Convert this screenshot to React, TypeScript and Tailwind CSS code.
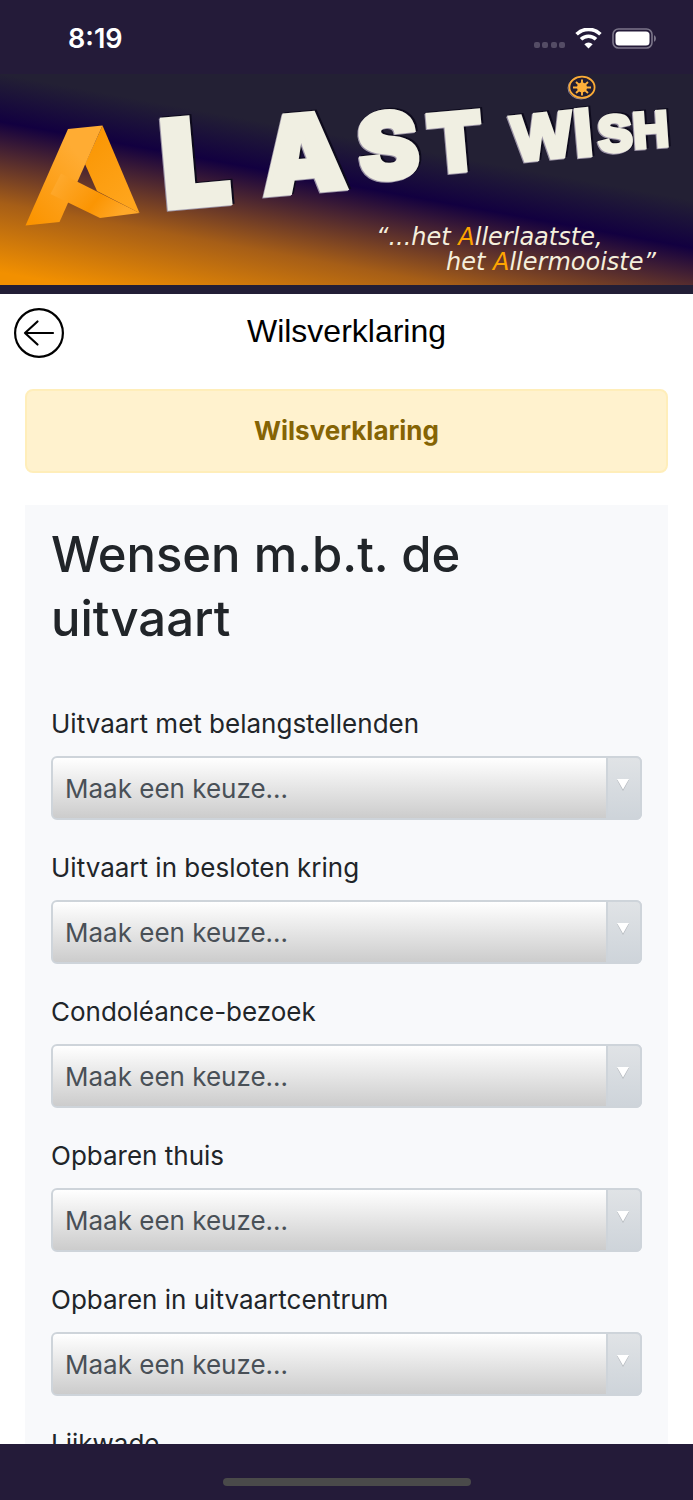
import React, { useState } from 'react';

const WISHES = [
  { id: 'belangstellenden', label: 'Uitvaart met belangstellenden' },
  { id: 'besloten', label: 'Uitvaart in besloten kring' },
  { id: 'condoleance', label: 'Condoléance-bezoek' },
  { id: 'thuis', label: 'Opbaren thuis' },
  { id: 'uitvaartcentrum', label: 'Opbaren in uitvaartcentrum' },
  { id: 'lijkwade', label: 'Lijkwade' },
];

const WIDE = 'Inter, sans-serif';
const NARROW = 'Liberation Sans, Arial, sans-serif';

// wordmark letters, each tilted around its own baseline start
const LETTERS = [
  { char: 'L', x: 165, y: 134, size: 120, angle: -5, font: WIDE, stroke: 6 },
  { char: 'A', x: 264, y: 121, size: 106, angle: -5, font: WIDE, stroke: 5 },
  { char: 'S', x: 361, y: 108, size: 92, angle: -6, font: WIDE, stroke: 4 },
  { char: 'T', x: 430, y: 100, size: 82, angle: -5, font: WIDE, stroke: 3 },
  { char: 'W', x: 515, y: 87, size: 63, angle: -6, font: NARROW, stroke: 5 },
  { char: 'I', x: 576, y: 82, size: 66, angle: -5, font: NARROW, stroke: 5 },
  { char: 'S', x: 600, y: 78, size: 50, angle: -5, font: NARROW, stroke: 5 },
  { char: 'H', x: 634, y: 74, size: 50, angle: -4, font: NARROW, stroke: 4 },
];

const StatusBar: React.FC = () => (
  <div className="flex h-[74px] shrink-0 items-center justify-between bg-[#241b39] pt-1 pr-9 pl-[68px]">
    <span className="text-[27px] leading-8 font-semibold text-white">8:19</span>
    <div className="flex items-center gap-[10px]">
      <svg width="32" height="22" viewBox="0 0 32 22" fill="#544c65">
        <rect x="1" y="14" width="6" height="6" rx="2" />
        <rect x="9" y="14" width="6" height="6" rx="2" />
        <rect x="18" y="14" width="6" height="6" rx="2" />
        <rect x="26" y="14" width="6" height="6" rx="2" />
      </svg>
      <svg width="27" height="22" viewBox="0 0 27 22" fill="none" stroke="#fff" strokeWidth="3.6">
        <path d="M1.6 6.2A17 17 0 0 1 25.4 6.2" />
        <path d="M6 11.3A10.8 10.8 0 0 1 21 11.3" />
        <path d="M13.5 20.5L9.3 16.3A6 6 0 0 1 17.7 16.3Z" fill="#fff" stroke="none" />
      </svg>
      <svg className="mb-[2px]" width="45" height="21" viewBox="0 0 45 21">
        <rect x="1" y="1" width="39" height="19" rx="5.5" fill="none" stroke="#7c768a" strokeWidth="1.6" />
        <rect x="3.5" y="3.5" width="34" height="14" rx="3.5" fill="#fff" />
        <path d="M42 7.2C44.6 8.2 44.6 12.8 42 13.8Z" fill="#7c768a" />
      </svg>
    </div>
  </div>
);

const Banner: React.FC = () => (
  <div className="shrink-0 border-b-[9px] border-[#221e36] bg-[#222034]">
    <svg className="block h-auto w-full" viewBox="0 0 693 211" role="img" aria-label="A Last Wish">
      <defs>
        <linearGradient id="sky" gradientUnits="userSpaceOnUse" x1="0" y1="0" x2="-35" y2="192">
          <stop offset="0" stopColor="#232034" />
          <stop offset="0.24" stopColor="#120040" />
          <stop offset="0.42" stopColor="#522a2f" />
          <stop offset="0.65" stopColor="#a65e17" />
          <stop offset="1" stopColor="#f29000" />
        </linearGradient>
        <linearGradient id="legLeft" x1="0.7" y1="0.3" x2="0.1" y2="1">
          <stop offset="0" stopColor="#ffac33" />
          <stop offset="1" stopColor="#fb9400" />
        </linearGradient>
        <linearGradient id="legRight" x1="0" y1="0" x2="0.6" y2="1">
          <stop offset="0" stopColor="#f99400" />
          <stop offset="1" stopColor="#ffa51c" />
        </linearGradient>
        <linearGradient id="bar" x1="0" y1="0" x2="1" y2="0.4">
          <stop offset="0" stopColor="#ffad35" />
          <stop offset="0.65" stopColor="#fb9503" />
          <stop offset="1" stopColor="#ffa828" />
        </linearGradient>
      </defs>
      <rect width="693" height="211" fill="url(#sky)" />

      {/* folded ribbon A */}
      <path d="M102.5 51.5L139.5 139L97 117L85 90Z" fill="url(#legRight)" />
      <path d="M68 55L102.5 51.5L59.5 148L25.5 151.5Z" fill="url(#legLeft)" />
      <path d="M61 99.5L139.5 139L100 144L50.5 120Z" fill="url(#bar)" />

      {LETTERS.map(({ char, x, y, size, angle, font, stroke }, i) => (
        <g
          key={i}
          transform={`rotate(${angle} ${x} ${y})`}
          fontFamily={font}
          fontSize={size}
          fontWeight={900}
          strokeWidth={stroke}
          strokeLinejoin="miter"
        >
          <text x={x + 2} y={y - 1} fill="#0d0a1c" stroke="#0d0a1c">{char}</text>
          <text x={x - 1} y={y + 1} fill="#9d95a8" stroke="#9d95a8">{char}</text>
          <text x={x} y={y} fill="#f0efe2" stroke="#f0efe2">{char}</text>
        </g>
      ))}

      {/* sun above the I */}
      <ellipse cx="581" cy="14" rx="13" ry="11" fill="none" stroke="#8d8598" strokeWidth="1" />
      <ellipse cx="582" cy="13.3" rx="12.6" ry="10.6" fill="#221e33" stroke="#fbab36" strokeWidth="1.8" />
      <circle cx="582" cy="13.5" r="5" fill="#ffb03a" />
      <path
        d="M582 5.5V21.5M573 13.5H591M576 8L588 19M588 8L576 19"
        stroke="#ffb03a"
        strokeWidth="1.9"
      />

      <g fontFamily="Verdana, DejaVu Sans, sans-serif" fontSize="24" fontStyle="italic" fill="#f5efdc">
        <text x="376" y="171">“...het <tspan fill="#ffa500">A</tspan>llerlaatste,</text>
        <text x="446" y="196">het <tspan fill="#ffa500">A</tspan>llermooiste”</text>
      </g>
    </svg>
  </div>
);

const WishSelect: React.FC<{ id: string; label: string }> = ({ id, label }) => {
  const [value, setValue] = useState('');

  return (
    <div className="flex flex-col gap-3">
      <label htmlFor={id} className="text-[26px] leading-10 text-[#212529]">{label}</label>
      <div className="relative">
        <select
          id={id}
          value={value}
          onChange={(e) => setValue(e.target.value)}
          className="block h-16 w-full appearance-none rounded-md border-2 border-[#ced4da] bg-linear-to-b from-white to-[#cccccc] pr-12 pl-3 text-[26px] text-[#495057]"
        >
          <option value="">Maak een keuze...</option>
          <option value="ja">Ja</option>
          <option value="nee">Nee</option>
        </select>
        <span className="pointer-events-none absolute inset-y-0 right-0 flex w-9 justify-center rounded-r-md border-2 border-[#ced4da] bg-linear-to-b from-[#e0e3e6] to-[#ced4da] pt-5 pr-[2px]">
          <svg width="14" height="14" viewBox="0 0 14 14">
            <path d="M1 2H13L7 13Z" fill="#b3b8bd" />
            <path d="M1 1H13L7 11.5Z" fill="#fff" />
          </svg>
        </span>
      </div>
    </div>
  );
};

export default function App() {
  return (
    <div className="flex h-screen flex-col bg-white font-['Inter','Liberation_Sans',sans-serif]">
      <StatusBar />
      <Banner />

      {/* Title bar */}
      <header className="grid shrink-0 grid-cols-[52px_1fr_52px] items-start px-[13px] pt-[13px] pb-[30px]">
        <button type="button" aria-label="Terug" className="p-px">
          <svg className="block" width="50" height="50" viewBox="0 0 50 50" fill="none" stroke="#000" strokeWidth="2.2">
            <circle cx="25" cy="25" r="23.9" />
            <path d="M39 25H11M23.5 13.5L11 25L23.5 36.5" strokeLinecap="round" strokeLinejoin="round" />
          </svg>
        </button>
        <h1 className="text-center font-['Liberation_Sans',Arial,sans-serif] text-[32px] leading-12 text-black">
          Wilsverklaring
        </h1>
      </header>

      {/* Scrollable form */}
      <main className="min-h-0 flex-1 overflow-y-auto px-[25px] [scrollbar-width:none]">
        <div className="rounded-lg border-2 border-[#ffeeba] bg-[#fff2ce] py-5 text-center text-[26px] leading-10 font-bold text-[#856404]">
          Wilsverklaring
        </div>

        <form className="mt-8 bg-[#f8f9fb] px-[26px] pt-[18px] pb-8">
          <h2 className="text-[49px] leading-16 font-medium text-[#212529]">
            Wensen m.b.t. de<br />uitvaart
          </h2>
          <div className="mt-[53px] flex flex-col gap-7">
            {WISHES.map((wish) => (
              <WishSelect key={wish.id} id={wish.id} label={wish.label} />
            ))}
          </div>
        </form>
      </main>

      {/* Home indicator */}
      <footer className="flex h-14 shrink-0 items-end justify-center bg-[#241b39] pb-[14px]">
        <div className="h-2 w-[248px] rounded-full bg-[#4a4a4a]" />
      </footer>
    </div>
  );
}
